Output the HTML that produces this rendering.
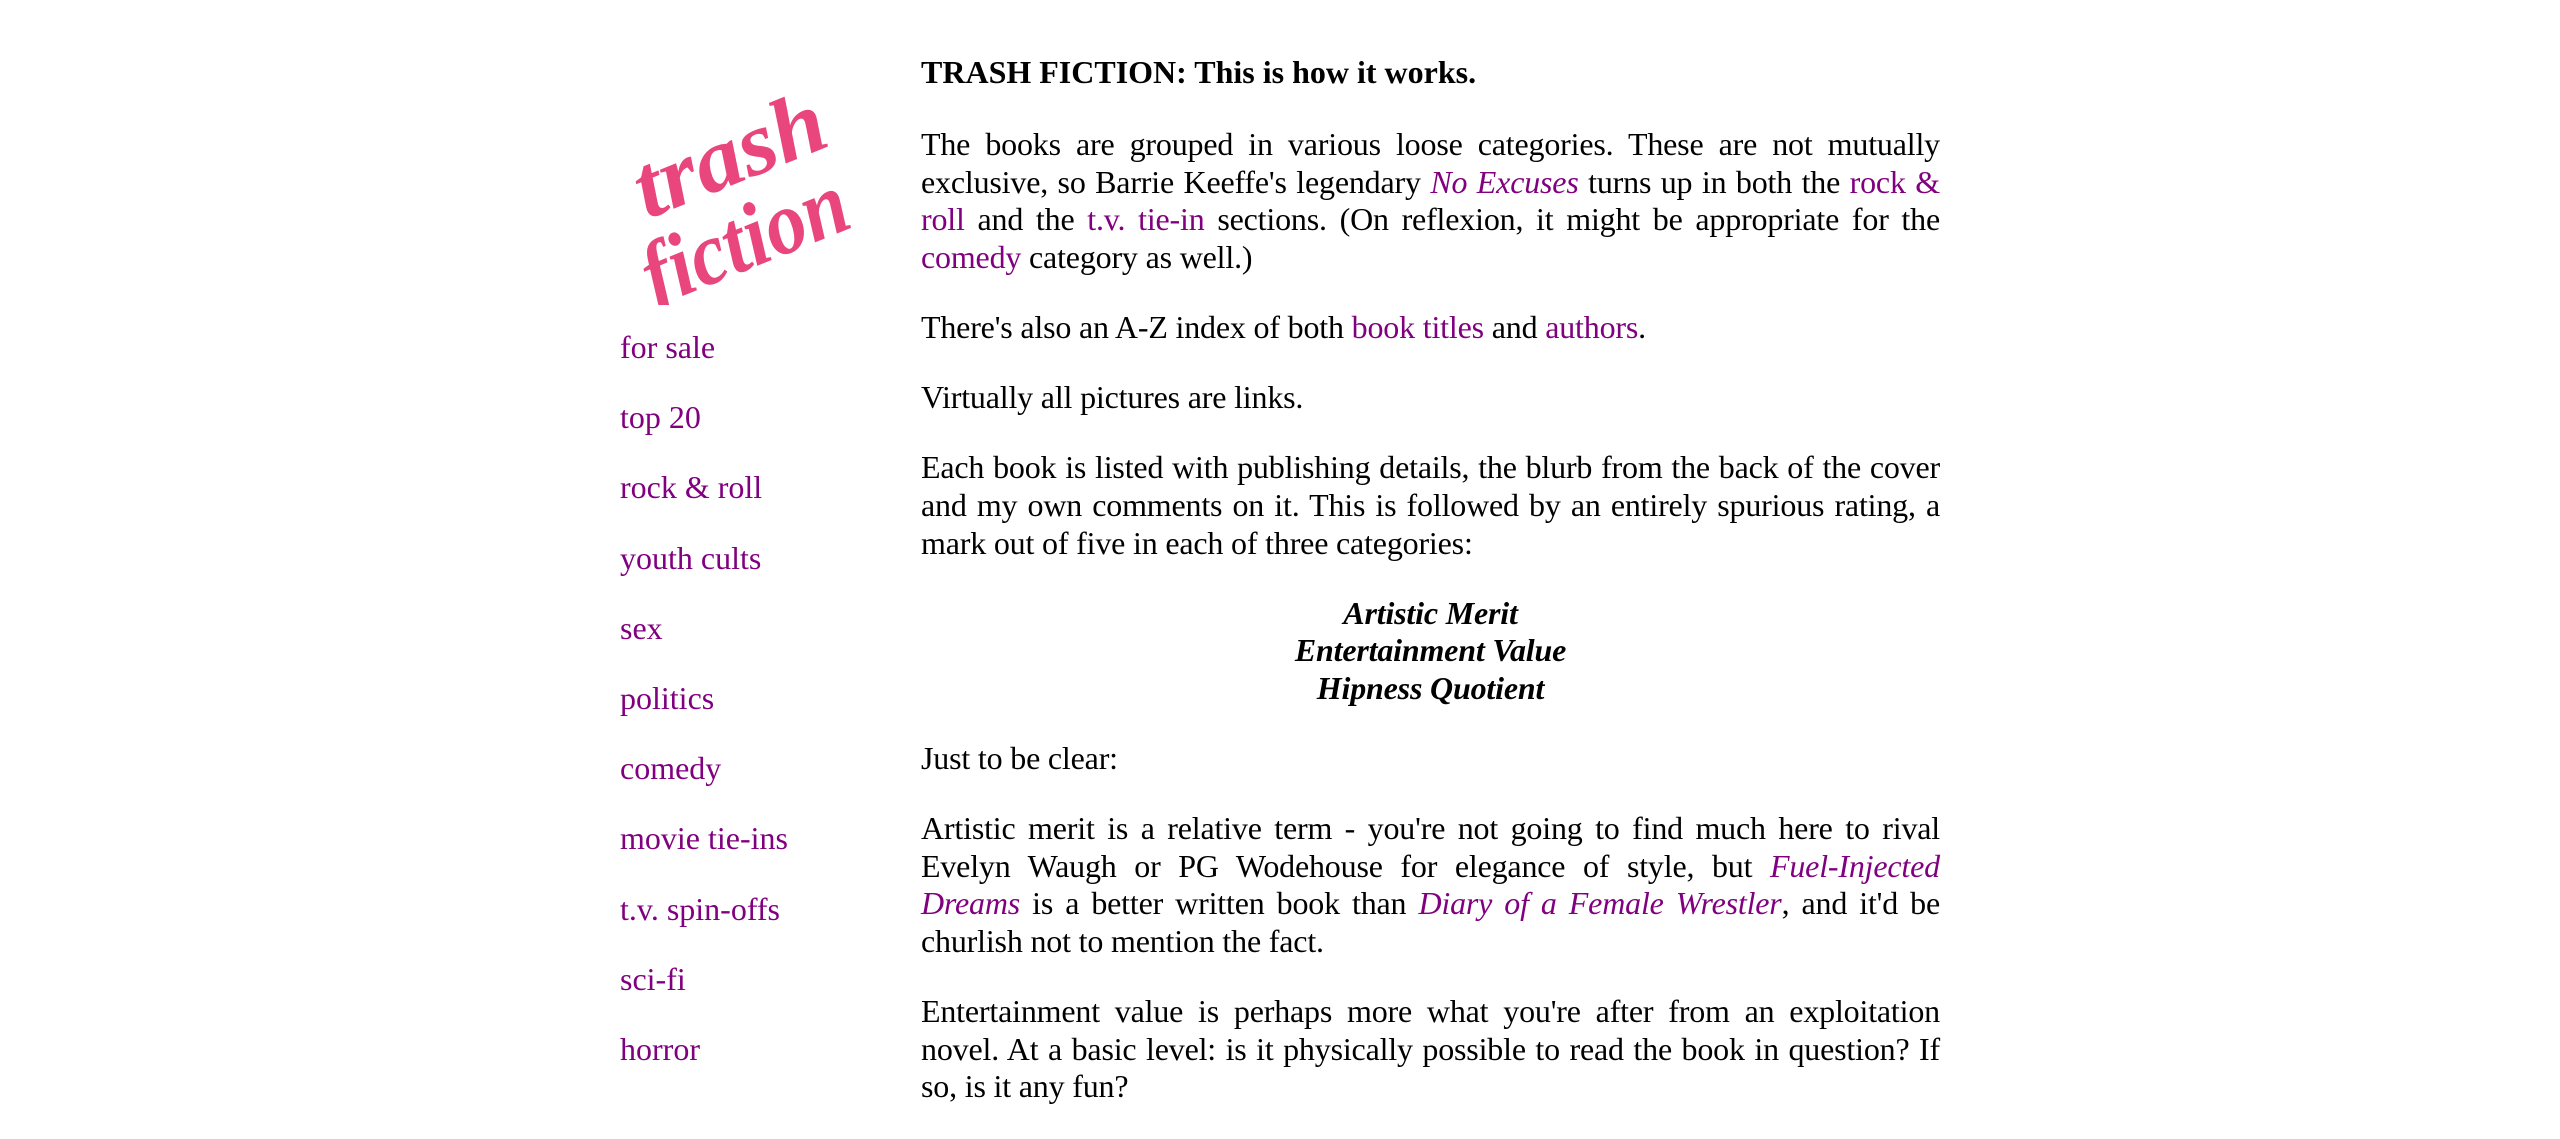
<!DOCTYPE html>
<html><head><meta charset="utf-8"><style>
html,body{margin:0;padding:0;background:#fff;}
body{width:2560px;height:1062px;overflow:hidden;position:relative;font-family:"Liberation Serif",serif;font-size:32px;line-height:37.6px;color:#000;}
a{color:#800080;text-decoration:none;}
#nav{position:absolute;left:620px;top:329px;}
#nav p{margin:0 0 32.6px 0;}
#main{position:absolute;left:921px;top:54px;width:1019px;text-align:justify;letter-spacing:-0.18px;}
#main p{margin:0 0 32.6px 0;}
h1{font-size:32px;margin:0 0 34.4px 0;line-height:37.6px;letter-spacing:0;}
.c{text-align:center;font-weight:bold;font-style:italic;}
#logo{position:absolute;left:620px;top:55px;}
</style></head><body>
<svg id="logo" width="250" height="250" viewBox="0 0 250 250">
<g fill="#e8467c" font-family="Liberation Serif,serif" font-style="italic" font-weight="bold">
<text x="10" y="125" font-size="90" textLength="200" lengthAdjust="spacingAndGlyphs" transform="rotate(-22 120 100)">trash</text>
<text x="15" y="215" font-size="90" textLength="215" lengthAdjust="spacingAndGlyphs" transform="rotate(-22 120 180)">fiction</text>
</g></svg>
<div id="nav">
<p><a>for sale</a></p>
<p><a>top 20</a></p>
<p><a>rock &amp; roll</a></p>
<p><a>youth cults</a></p>
<p><a>sex</a></p>
<p><a>politics</a></p>
<p><a>comedy</a></p>
<p><a>movie tie-ins</a></p>
<p><a>t.v. spin-offs</a></p>
<p><a>sci-fi</a></p>
<p><a>horror</a></p>
</div>
<div id="main">
<h1>TRASH FICTION: This is how it works.</h1>
<p>The books are grouped in various loose categories. These are not mutually exclusive, so Barrie Keeffe's legendary <a><i>No Excuses</i></a> turns up in both the <a>rock &amp;</a><br style="display:none"> <a>roll</a> and the <a>t.v. tie-in</a> sections. (On reflexion, it might be appropriate for the <a>comedy</a> category as well.)</p>
<p>There's also an A-Z index of both <a>book titles</a> and <a>authors</a>.</p>
<p>Virtually all pictures are links.</p>
<p>Each book is listed with publishing details, the blurb from the back of the cover and my own comments on it. This is followed by an entirely spurious rating, a mark out of five in each of three categories:</p>
<p class="c">Artistic Merit<br>Entertainment Value<br>Hipness Quotient</p>
<p>Just to be clear:</p>
<p>Artistic merit is a relative term - you're not going to find much here to rival Evelyn Waugh or PG Wodehouse for elegance of style, but <a><i>Fuel-Injected Dreams</i></a> is a better written book than <a><i>Diary of a Female Wrestler</i></a>, and it'd be churlish not to mention the fact.</p>
<p>Entertainment value is perhaps more what you're after from an exploitation novel. At a basic level: is it physically possible to read the book in question? If so, is it any fun?</p>
</div>
</body></html>
